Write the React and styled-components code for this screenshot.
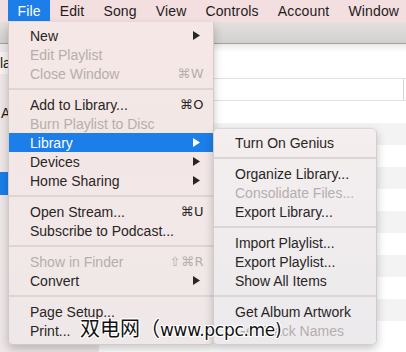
import React from "react";
import styled, { createGlobalStyle } from "styled-components";

const Global = createGlobalStyle`
  html, body { margin: 0; padding: 0; }
  body { font-family: "Liberation Sans", "DejaVu Sans", sans-serif; }
`;

const Screen = styled.div`
  position: relative;
  width: 406px;
  height: 352px;
  overflow: hidden;
  background: #ffffff;
  font-family: "Liberation Sans", "DejaVu Sans", sans-serif;
  font-size: 14px;
  color: #2a2525;
`;

const MenuBar = styled.div`
  display: flex;
  height: 22px;
  padding-left: 8px;
  background: #f3dfdf;
  box-sizing: border-box;
`;

const BarItem = styled.div`
  display: flex;
  align-items: center;
  height: 21px;
  padding: 0 9.5px;
  letter-spacing: 0.15px;
  color: ${(p) => (p.$open ? "#ffffff" : "#1f1b1b")};
  background: ${(p) => (p.$open ? "#1c7ee8" : "transparent")};
  white-space: nowrap;
`;

const Window = styled.div`
  display: flex;
  flex-direction: column;
  height: 330px;
`;

const Toolbar = styled.div`
  height: 21px;
  background: linear-gradient(#e4e0e0, #d2cfcf);
  border-bottom: 1px solid #a3a0a0;
`;

const Body = styled.div`
  display: flex;
  flex: 1;
`;

const Sidebar = styled.div`
  width: 99px;
  flex: none;
  display: flex;
  flex-direction: column;
  padding-top: 8px;
  background: #efe7e7;
  box-sizing: border-box;
  overflow: hidden;
`;

const SideRow = styled.div`
  height: ${(p) => p.$h || 22}px;
  margin-top: ${(p) => p.$gap || 0}px;
  display: flex;
  align-items: center;
  padding-left: ${(p) => p.$indent || 0}px;
  background: ${(p) => (p.$selected ? "#1c7ee8" : p.$light ? "#f7f3f3" : "transparent")};
  color: #1f1b1b;
  white-space: nowrap;
`;

const Main = styled.div`
  flex: 1;
  display: flex;
  flex-direction: column;
  background: linear-gradient(#ebe8e8 0px, #ffffff 8px);
`;

const Header = styled.div`
  height: 34px;
  border-bottom: 1px solid #e2e0e0;
`;

const SearchRow = styled.div`
  height: 21px;
  display: flex;
  justify-content: flex-end;
  border-bottom: 1px solid #e2e0e0;
`;

const Divider = styled.div`
  width: 2px;
  border-left: 1px solid #d6d4d4;
`;

const Gap = styled.div`
  height: 22px;
  background: #ffffff;
`;

const Stripe = styled.div`
  height: 22px;
  flex: none;
  background: ${(p) => (p.$odd ? "#ffffff" : "#f4f3f3")};
`;

const Menu = styled.div`
  position: absolute;
  top: ${(p) => p.$top}px;
  left: ${(p) => p.$left}px;
  width: ${(p) => p.$width}px;
  box-sizing: border-box;
  padding: 4px 0;
  border: 1px solid rgba(0, 0, 0, 0.13);
  border-top: ${(p) => (p.$sub ? "1px solid rgba(0,0,0,0.08)" : "none")};
  border-radius: ${(p) => (p.$sub ? "5px" : "0 0 5px 5px")};
  background: ${(p) =>
    p.$sub
      ? "linear-gradient(#f4eeee, #eceaed)"
      : "linear-gradient(#f5e7e5, #efe8e8)"};
  box-shadow: 0 4px 10px rgba(0, 0, 0, 0.22);
`;

const Item = styled.div`
  display: flex;
  align-items: center;
  height: 19px;
  padding: 0 9px 0 21px;
  white-space: nowrap;
  color: ${(p) => (p.$active ? "#ffffff" : p.$disabled ? "#b6aead" : "#2a2525")};
  background: ${(p) => (p.$active ? "#1c7ee8" : "transparent")};
`;

const Label = styled.span`
  flex: 1;
`;

const Shortcut = styled.span`
  font-family: "DejaVu Sans", "Liberation Sans", sans-serif;
  font-size: 13px;
  letter-spacing: 0.5px;
`;

const ArrowBox = styled.svg`
  margin-right: 4px;
  display: block;
`;

const Sep = styled.div`
  height: 2px;
  margin: 5px 0;
  background: #ddd5d4;
`;

const Watermark = styled.div`
  position: absolute;
  left: 80px;
  top: 316px;
  font-family: "Noto Sans CJK SC", "DejaVu Sans", sans-serif;
  font-size: 20px;
  line-height: 24px;
  color: #111111;
  white-space: nowrap;
  text-shadow: 1px 0 0 #fff, -1px 0 0 #fff, 0 1px 0 #fff, 0 -1px 0 #fff,
    1px 1px 0 #fff, -1px -1px 0 #fff, 1px -1px 0 #fff, -1px 1px 0 #fff;
  z-index: 5;
`;

const Latin = styled.span`
  font-family: "DejaVu Sans", sans-serif;
  font-size: 17px;
  letter-spacing: -0.3px;
`;

const Arrow = ({ active }) => (
  <ArrowBox width="7" height="9" viewBox="0 0 7 9">
    <polygon points="0,0 7,4.5 0,9" fill={active ? "#ffffff" : "#2a2525"} />
  </ArrowBox>
);

const fileItems = [
  { label: "New", arrow: true },
  { label: "Edit Playlist", disabled: true },
  { label: "Close Window", disabled: true, sc: "⌘W" },
  { sep: true },
  { label: "Add to Library...", sc: "⌘O" },
  { label: "Burn Playlist to Disc", disabled: true },
  { label: "Library", arrow: true, active: true },
  { label: "Devices", arrow: true },
  { label: "Home Sharing", arrow: true },
  { sep: true },
  { label: "Open Stream...", sc: "⌘U" },
  { label: "Subscribe to Podcast..." },
  { sep: true },
  { label: "Show in Finder", disabled: true, sc: "⇧⌘R" },
  { label: "Convert", arrow: true },
  { sep: true },
  { label: "Page Setup..." },
  { label: "Print..." },
];

const libItems = [
  { label: "Turn On Genius" },
  { sep: true },
  { label: "Organize Library..." },
  { label: "Consolidate Files...", disabled: true },
  { label: "Export Library..." },
  { sep: true },
  { label: "Import Playlist..." },
  { label: "Export Playlist..." },
  { label: "Show All Items" },
  { sep: true },
  { label: "Get Album Artwork" },
  { label: "Get Track Names", disabled: true },
];

const renderItems = (items) =>
  items.map((it, i) =>
    it.sep ? (
      <Sep key={i} />
    ) : (
      <Item key={i} $disabled={it.disabled} $active={it.active}>
        <Label>{it.label}</Label>
        {it.sc && <Shortcut>{it.sc}</Shortcut>}
        {it.arrow && <Arrow active={it.active} />}
      </Item>
    )
  );

const bar = ["File", "Edit", "Song", "View", "Controls", "Account", "Window"];

export default function App() {
  return (
    <Screen>
      <Global />
      <MenuBar>
        {bar.map((b, i) => (
          <BarItem key={b} $open={i === 0}>
            {b}
          </BarItem>
        ))}
      </MenuBar>
      <Window>
        <Toolbar />
        <Body>
          <Sidebar>
            <SideRow $light>la</SideRow>
            <SideRow $gap={28} $indent={1}>A</SideRow>
            <SideRow $gap={48} $h={23} $selected />
          </Sidebar>
          <Main>
            <Header />
            <SearchRow>
              <Divider />
            </SearchRow>
            <Gap />
            {Array.from({ length: 10 }).map((_, i) => (
              <Stripe key={i} $odd={i % 2 === 1} />
            ))}
          </Main>
        </Body>
      </Window>
      <Menu $top={22} $left={8} $width={206}>
        {renderItems(fileItems)}
      </Menu>
      <Menu $top={128} $left={213} $width={164} $sub>
        {renderItems(libItems)}
      </Menu>
      <Watermark>
        双电网（<Latin>www.pcpc.me)</Latin>
      </Watermark>
    </Screen>
  );
}
